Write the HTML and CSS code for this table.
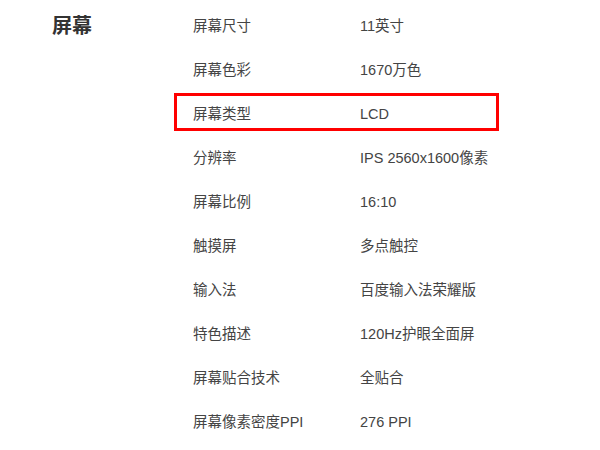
FILE: index.html
```html
<!DOCTYPE html>
<html lang="zh-CN">
<head>
  <meta charset="UTF-8">
  <title>屏幕参数</title>
  <link rel="stylesheet" href="styles.css">
</head>
<body>

  <div class="spec">
    <div class="spec-title">屏幕</div>

    <div class="spec-list">
      <div class="spec-row"><span>屏幕尺寸</span><span>11英寸</span></div>
      <div class="spec-row"><span>屏幕色彩</span><span>1670万色</span></div>
      <div class="spec-row active"><span>屏幕类型</span><span>LCD</span></div>
      <div class="spec-row"><span>分辨率</span><span>IPS 2560x1600像素</span></div>
      <div class="spec-row"><span>屏幕比例</span><span>16:10</span></div>
      <div class="spec-row"><span>触摸屏</span><span>多点触控</span></div>
      <div class="spec-row"><span>输入法</span><span>百度输入法荣耀版</span></div>
      <div class="spec-row"><span>特色描述</span><span>120Hz护眼全面屏</span></div>
      <div class="spec-row"><span>屏幕贴合技术</span><span>全贴合</span></div>
      <div class="spec-row"><span>屏幕像素密度PPI</span><span>276 PPI</span></div>
    </div>
  </div>

</body>
</html>
```

FILE: styles.css
```css
body {
  margin: 0;
  padding: 0;
  background: #fff;
  font-family: "Liberation Sans", "Noto Sans CJK SC", sans-serif;
  color: #333;
}

.spec {
  display: flex;
  padding: 4px 0 0 52px;
}

.spec-title {
  width: 141px;
  line-height: 44px;
  font-size: 20px;
  font-weight: bold;
  color: #333;
}

.spec-list {
  display: flex;
  flex-direction: column;
}

.spec-row {
  display: grid;
  grid-template-columns: 167px 1fr;
  height: 44px;
  line-height: 44px;
  font-size: 14.5px;
  color: #444;
}

/* highlighted row gets the red frame */
.spec-row.active {
  position: relative;
}

.spec-row.active::after {
  content: "";
  position: absolute;
  top: 1px;
  left: -19px;
  width: 325px;
  height: 38px;
  border: 3px solid #f00;
  box-sizing: border-box;
}
```
